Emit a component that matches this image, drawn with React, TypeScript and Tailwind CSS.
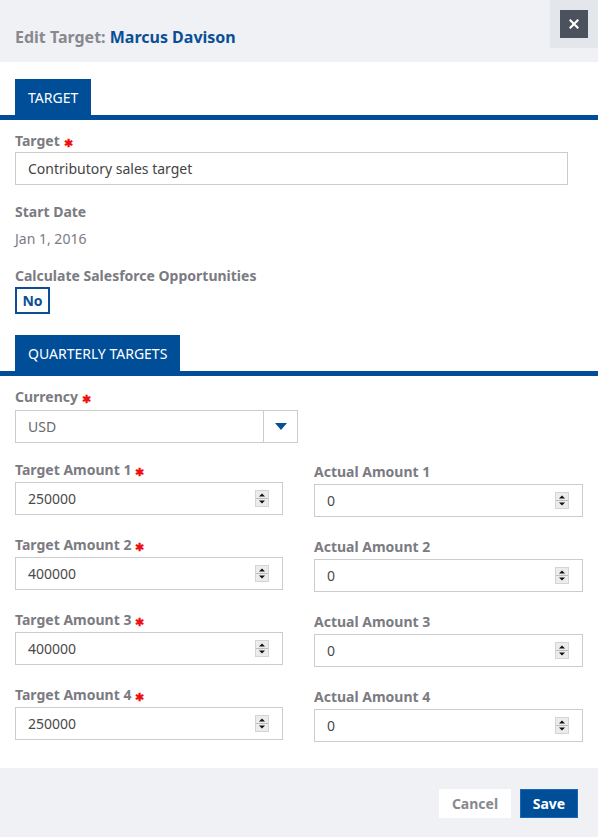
import React from 'react'

const BLUE = 'text-[#0a4f96]'

function Asterisk() {
  return <span className="ml-[4px] text-[#ee1111] text-[11px] align-top relative top-[2px]">✱</span>
}

function Label({ text, required }: { text: string; required?: boolean }) {
  return (
    <div className="text-[14px] leading-[20px] font-bold text-[#7b7b82]">
      {text}
      {required && <Asterisk />}
    </div>
  )
}

function Spinner() {
  return (
    <svg width="14" height="17" viewBox="0 0 14 17" className="shrink-0">
      <rect x="0.5" y="0.5" width="13" height="16" fill="#ececec" stroke="#d4d4d4" />
      <line x1="1" y1="8.5" x2="13" y2="8.5" stroke="#bdbdbd" />
      <path d="M4 6.5 L7 3.5 L10 6.5 Z" fill="#111" />
      <path d="M4 10.5 L7 13.5 L10 10.5 Z" fill="#111" />
    </svg>
  )
}

function NumberField({ value }: { value: string }) {
  return (
    <div className="h-[33px] border border-[#cccccc] bg-white flex items-center pl-[12px] pr-[13px] justify-between">
      <span className="text-[14px] text-[#4a4a4a]">{value}</span>
      <Spinner />
    </div>
  )
}

function Tab({ title }: { title: string }) {
  return (
    <div>
      <div className="px-[15px]">
        <div className="inline-flex items-center h-[36px] px-[13px] bg-[#004e98] text-white text-[14px]">
          {title}
        </div>
      </div>
      <div className="h-[5px] bg-[#004e98]" />
    </div>
  )
}

const rows = [
  { target: '250000', actual: '0' },
  { target: '400000', actual: '0' },
  { target: '400000', actual: '0' },
  { target: '250000', actual: '0' },
]

export default function App() {
  return (
    <div className="w-[598px] h-[837px] flex flex-col bg-white" style={{ fontFamily: '"Noto Sans", "Open Sans", sans-serif' }}>
      <div className="relative h-[62px] bg-[#eff1f5] px-[15px] pt-[25px] shrink-0">
        <div className="text-[16px] leading-[24px] font-bold">
          <span className="text-[#88888e]">Edit Target: </span>
          <span className={BLUE}>Marcus Davison</span>
        </div>
        <div className="absolute top-0 right-0 w-[48px] h-[48px] bg-[#e3e6ea] flex items-center justify-center">
          <div className="w-[28px] h-[28px] bg-[#4b525e] flex items-center justify-center">
            <svg width="10" height="10" viewBox="0 0 10 10">
              <path d="M1.5 1.5 L8.5 8.5 M8.5 1.5 L1.5 8.5" stroke="#fff" strokeWidth="2.2" strokeLinecap="square" />
            </svg>
          </div>
        </div>
      </div>

      <div className="flex-1 pt-[17px]">
        <Tab title="TARGET" />
        <div className="px-[15px] pt-[11px]">
          <Label text="Target" required />
          <div className="mt-[1px] w-[553px] h-[33px] border border-[#cccccc] flex items-center pl-[12px] text-[14px] text-[#444]">
            Contributory sales target
          </div>
          <div className="mt-[17px]">
            <Label text="Start Date" />
          </div>
          <div className="mt-[7px] text-[14px] leading-[20px] text-[#7b7b82]">Jan 1, 2016</div>
          <div className="mt-[17px]">
            <Label text="Calculate Salesforce Opportunities" />
          </div>
          <div className="mt-[1px] w-[35px] h-[27px] border-2 border-[#0a4f96] flex items-center justify-center text-[14px] font-bold text-[#0a4f96]">
            No
          </div>
        </div>

        <div className="mt-[21px]">
          <Tab title="QUARTERLY TARGETS" />
        </div>
        <div className="px-[15px] pt-[11px]">
          <Label text="Currency" required />
          <div className="mt-[3px] w-[283px] h-[33px] border border-[#cccccc] flex">
            <div className="flex-1 flex items-center pl-[12px] text-[14px] text-[#6a6a70]">USD</div>
            <div className="w-[34px] border-l border-[#cccccc] flex items-center justify-center">
              <svg width="12" height="7" viewBox="0 0 12 7">
                <path d="M0 0 L12 0 L6 7 Z" fill="#0a4f96" />
              </svg>
            </div>
          </div>

          <div className="mt-[17px] flex flex-col gap-[18px]">
            {rows.map((r, i) => (
              <div key={i} className="grid grid-cols-[268px_269px] gap-x-[31px]">
                <div>
                  <Label text={`Target Amount ${i + 1}`} required />
                  <div className="mt-[2px]">
                    <NumberField value={r.target} />
                  </div>
                </div>
                <div className="pt-[2px]">
                  <Label text={`Actual Amount ${i + 1}`} />
                  <div className="mt-[2px]">
                    <NumberField value={r.actual} />
                  </div>
                </div>
              </div>
            ))}
          </div>
        </div>
      </div>

      <div className="h-[69px] bg-[#eff1f5] shrink-0 flex items-start justify-end pt-[21px] pr-[20px] gap-[9px]">
        <button className="w-[72px] h-[29px] bg-white text-[14px] font-bold text-[#88888e]">Cancel</button>
        <button className="w-[58px] h-[29px] bg-[#004e98] border border-[#1a66b8] text-[14px] font-bold text-white">Save</button>
      </div>
    </div>
  )
}
